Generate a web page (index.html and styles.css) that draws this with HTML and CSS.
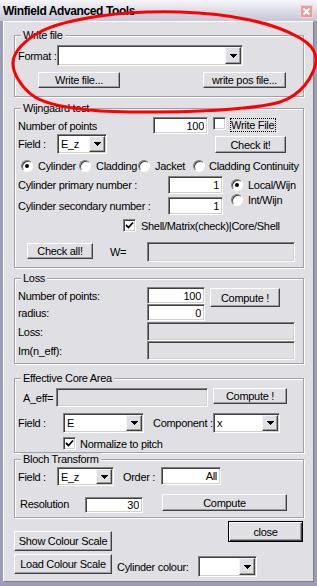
FILE: index.html
```html
<!DOCTYPE html>
<html lang="en">
<head>
<meta charset="UTF-8" />
<meta name="viewport" content="width=device-width, initial-scale=1" />
<title>Winfield Advanced Tools</title>
<link rel="stylesheet" href="styles.css">
</head>
<body>
<div class="window">
  <div class="titlebar">
    <span class="title">Winfield Advanced Tools</span>
    <span class="close-x">
      <svg width="11" height="11" viewBox="0 0 11 11"><path d="M2.5 2.5l6 6M8.5 2.5l-6 6" stroke="#fff" stroke-width="2" fill="none"/></svg>
    </span>
  </div>

  <div class="client">
    <!-- write file -->
    <div class="group g-write">
      <div class="group-title">Write file</div>
      <div class="row r-format">
        <span class="lbl w-field">Format :</span>
        <div class="combo c-format"><span class="val"></span><span class="drop"><svg width="7" height="4"><path d="M0 0h7l-3.5 4z"/></svg></span></div>
      </div>
      <div class="row r-writebtns">
        <button class="btn b-write">Write file...</button>
        <button class="btn b-writepos">write pos file...</button>
      </div>
    </div>

    <!-- wijngaard test -->
    <div class="group g-wijn">
      <div class="group-title">Wijngaard test</div>
      <div class="row r-points">
        <span class="lbl w-points">Number of points</span>
        <input class="edit e-55" value="100">
        <span class="check c-write"></span>
        <span class="focus">Write File</span>
      </div>
      <div class="row r-field">
        <span class="lbl w-field">Field :</span>
        <div class="combo c-fieldw"><span class="val">E_z</span><span class="drop"><svg width="7" height="4"><path d="M0 0h7l-3.5 4z"/></svg></span></div>
        <button class="btn b-checkit">Check it!</button>
      </div>
      <div class="row r-radios">
        <span class="opt o-cyl"><span class="radio on"></span><span class="opt-txt">Cylinder</span></span>
        <span class="opt o-clad"><span class="radio"></span><span class="opt-txt">Cladding</span></span>
        <span class="opt o-jack"><span class="radio"></span><span class="opt-txt">Jacket</span></span>
        <span class="opt o-cont"><span class="radio"></span><span class="opt-txt tight">Cladding Continuity</span></span>
      </div>
      <div class="row r-cyl1">
        <span class="lbl w-cyl">Cylinder primary number :</span>
        <input class="edit e-55 tall" value="1">
        <span class="opt o-side"><span class="radio on"></span><span class="opt-txt">Local/Wijn</span></span>
      </div>
      <div class="row r-cyl2">
        <span class="lbl w-cyl">Cylinder secondary number :</span>
        <input class="edit e-55 tall" value="1">
        <span class="opt o-side up"><span class="radio"></span><span class="opt-txt">Int/Wijn</span></span>
      </div>
      <div class="row r-shell">
        <span class="check on c-shell"><svg width="9" height="9" viewBox="0 0 9 9"><path d="M1 4l2.5 2.5L8 1.5" stroke="#000" stroke-width="1.8" fill="none"/></svg></span>
        <span class="opt-txt">Shell/Matrix(check)|Core/Shell</span>
      </div>
      <div class="row r-checkall">
        <button class="btn b-checkall">Check all!</button>
        <span class="lbl w-w">W=</span>
        <input class="edit e-148 h20" disabled>
      </div>
    </div>

    <!-- loss -->
    <div class="group g-loss">
      <div class="group-title">Loss</div>
      <div class="row r-lpoints">
        <span class="lbl w-loss">Number of points:</span>
        <input class="edit e-58" value="100">
        <button class="btn b-compute1">Compute !</button>
      </div>
      <div class="row r-radius">
        <span class="lbl w-loss">radius:</span>
        <input class="edit e-58" value="0">
      </div>
      <div class="row r-lossval">
        <span class="lbl w-loss">Loss:</span>
        <input class="edit e-148 h19" disabled>
      </div>
      <div class="row r-imval">
        <span class="lbl w-loss">Im(n_eff):</span>
        <input class="edit e-148 h19" disabled>
      </div>
    </div>

    <!-- effective core area -->
    <div class="group g-eca">
      <div class="group-title">Effective Core Area</div>
      <div class="row r-aeff">
        <span class="lbl w-aeff">A_eff=</span>
        <input class="edit e-152 h19" disabled>
        <button class="btn b-compute2">Compute !</button>
      </div>
      <div class="row r-ecafield">
        <span class="lbl w-field2">Field :</span>
        <div class="combo c-ecafield"><span class="val">E</span><span class="drop"><svg width="7" height="4"><path d="M0 0h7l-3.5 4z"/></svg></span></div>
        <span class="lbl w-comp">Component :</span>
        <div class="combo c-comp"><span class="val">x</span><span class="drop"><svg width="7" height="4"><path d="M0 0h7l-3.5 4z"/></svg></span></div>
      </div>
      <div class="row r-norm">
        <span class="check on c-norm"><svg width="9" height="9" viewBox="0 0 9 9"><path d="M1 4l2.5 2.5L8 1.5" stroke="#000" stroke-width="1.8" fill="none"/></svg></span>
        <span class="opt-txt">Normalize to pitch</span>
      </div>
    </div>

    <!-- bloch -->
    <div class="group g-bloch">
      <div class="group-title">Bloch Transform</div>
      <div class="row r-bfield">
        <span class="lbl w-field">Field :</span>
        <div class="combo c-bfield"><span class="val">E_z</span><span class="drop"><svg width="7" height="4"><path d="M0 0h7l-3.5 4z"/></svg></span></div>
        <span class="lbl w-order">Order :</span>
        <input class="edit e-60 tall" value="All">
      </div>
      <div class="row r-res">
        <span class="lbl w-res">Resolution</span>
        <input class="edit e-58 short" value="30">
        <button class="btn b-compute3">Compute</button>
      </div>
    </div>

    <div class="footer">
      <div class="foot-left">
        <button class="btn b-scale">Show Colour Scale</button>
        <button class="btn b-scale b-load">Load Colour Scale</button>
      </div>
      <div class="foot-right">
        <button class="btn default b-close">close</button>
        <div class="row r-cylcol">
          <span class="lbl w-cylcol">Cylinder colour:</span>
          <div class="combo c-cylcol"><span class="val"></span><span class="drop"><svg width="7" height="4"><path d="M0 0h7l-3.5 4z"/></svg></span></div>
        </div>
      </div>
    </div>
  </div>

  <svg class="mark" width="317" height="586" viewBox="0 0 317 586">
    <path d="M13 62C13.8 51.2 25.5 39.7 40 32C54.5 24.3 76.7 19.3 100 16C123.3 12.7 155 11.3 180 12C205 12.7 230 15.7 250 20C270 24.3 289 31.7 300 38C311 44.3 315.2 50.2 316 58C316.8 65.8 311 77.7 305 85C299 92.3 292 98 280 102C268 106 253 107.3 233 109C213 110.7 183.8 111.8 160 112C136.2 112.2 110.8 112.2 90 110C69.2 107.8 47.8 105 35 97C22.2 89 12.2 72.8 13 62Z" fill="none" stroke="#f00" stroke-width="3"/>
  </svg>
</div>
</body>
</html>
```

FILE: styles.css
```css
* {
  box-sizing: border-box;
}
body {
  margin: 0;
  font-family: "Liberation Sans", Arial, sans-serif;
  font-size: 11px;
  letter-spacing: -0.3px;
  color: #000;
  background: #e0dfe3;
}
.window {
  position: relative;
  width: 317px;
  height: 586px;
  background: #9a9cb8;
  overflow: hidden;
}
.titlebar {
  height: 21px;
  display: flex;
  align-items: center;
  justify-content: space-between;
  padding: 0 4px 0 3px;
  background: linear-gradient(#f6f6fa, #e2e2ea 40%, #c6c6d6);
}
.title {
  font-weight: bold;
  font-size: 12px;
  letter-spacing: -0.4px;
}
.close-x {
  width: 13px;
  height: 13px;
  margin-top: 1px;
  display: flex;
  align-items: center;
  justify-content: center;
  background: #e89c9c;
  border: 1px solid #f6d4d4;
}
.close-x svg {
  display: block;
}
.client {
  margin: 0 3px;
  height: 561px;
  background: #e0dfe3;
  border: 1px solid;
  border-color: #fff #808080 #808080 #fff;
}

/* group boxes */
.group {
  margin-left: 10px;
  width: 290px;
  border: 1px solid #a0a0a8;
  box-shadow: inset 1px 1px 0 #fff, 1px 1px 0 #fff;
}
.group-title {
  width: fit-content;
  margin: -7px 0 0 6px;
  padding: 0 2px;
  line-height: 13px;
  background: #e0dfe3;
}
.g-write { margin-top: 13px; padding-bottom: 8px; }
.g-wijn { margin-top: 11px; padding-bottom: 5px; }
.g-loss { margin-top: 10px; padding-bottom: 3px; }
.g-eca { margin-top: 14px; padding-bottom: 2px; }
.g-bloch { margin-top: 6px; padding-bottom: 4px; }

.row {
  display: flex;
  align-items: center;
}
.lbl {
  flex: none;
  white-space: nowrap;
  margin-left: 3px;
}

/* controls */
.edit {
  flex: none;
  height: 17px;
  font: inherit;
  letter-spacing: inherit;
  color: #000;
  text-align: right;
  padding: 0 3px;
  background: #fff;
  border: 1px solid;
  border-color: #808080 #fff #fff #808080;
  box-shadow: inset 1px 1px 0 #404040, inset -1px -1px 0 #d4d0c8;
  outline: none;
}
.edit:disabled {
  background: #e0dfe3;
}
.btn {
  flex: none;
  font: inherit;
  letter-spacing: inherit;
  color: #000;
  padding: 0;
  background: #e0dfe3;
  border: 1px solid;
  border-color: #fff #404040 #404040 #fff;
  box-shadow: inset -1px -1px 0 #9d9da1;
  display: flex;
  align-items: center;
  justify-content: center;
  white-space: nowrap;
}
.btn.default {
  border-color: #000;
  box-shadow: inset 1px 1px 0 #fff, inset -1px -1px 0 #404040, inset -2px -2px 0 #9d9da1;
}
.combo {
  flex: none;
  display: flex;
  height: 20px;
  padding: 1px;
  background: #fff;
  border: 1px solid;
  border-color: #808080 #fff #fff #808080;
  box-shadow: inset 1px 1px 0 #404040, inset -1px -1px 0 #d4d0c8;
}
.combo .val {
  flex: 1;
  padding-left: 2px;
  display: flex;
  align-items: center;
}
.drop {
  width: 16px;
  display: flex;
  align-items: center;
  justify-content: center;
  background: #e0dfe3;
  border: 1px solid;
  border-color: #f4f4f6 #404040 #404040 #f4f4f6;
  box-shadow: inset -1px -1px 0 #9d9da1;
}
.drop svg {
  display: block;
  shape-rendering: crispEdges;
}
.radio {
  flex: none;
  position: relative;
  width: 12px;
  height: 12px;
  border-radius: 50%;
  background: #fff;
  border: 1px solid;
  border-color: #808080 #fff #fff #808080;
  box-shadow: inset 1px 1px 0 #404040;
}
.radio.on::after {
  content: "";
  position: absolute;
  left: 3px;
  top: 3px;
  width: 4px;
  height: 4px;
  border-radius: 50%;
  background: #000;
}
.check {
  flex: none;
  width: 13px;
  height: 13px;
  display: flex;
  align-items: center;
  justify-content: center;
  background: #fff;
  border: 1px solid;
  border-color: #808080 #fff #fff #808080;
  box-shadow: inset 1px 1px 0 #404040, inset -1px -1px 0 #d4d0c8;
}
.check svg {
  display: block;
}
.opt {
  flex: none;
  display: flex;
  align-items: center;
}
.opt-txt {
  margin-left: 5px;
  white-space: nowrap;
}
.opt-txt.tight {
  margin-left: 4px;
}
.focus {
  align-self: flex-start;
  margin: 1px 0 0 4px;
  padding: 0 1px 0 0;
  height: 14px;
  line-height: 12px;
  border: 1px dotted #000;
}

/* write file */
.w-field { width: 39px; }
.r-format { margin-top: 3px; height: 21px; }
.c-format { width: 186px; height: 21px; }
.r-writebtns { margin-top: 6px; height: 16px; }
.b-write { margin-left: 23px; width: 82px; height: 16px; }
.b-writepos { margin-left: 83px; width: 83px; height: 16px; }

/* wijngaard */
.r-points { margin-top: 2px; height: 17px; }
.w-points { width: 135px; }
.e-55 { width: 55px; }
.c-write { align-self: flex-start; margin-left: 5px; }
.r-field { height: 20px; }
.c-fieldw { width: 50px; }
.b-checkit { align-self: flex-start; margin: 2px 0 0 108px; width: 71px; height: 17px; }
.r-radios { margin-top: 4px; height: 16px; }
.o-cyl { margin-left: 6px; width: 58px; }
.o-clad { width: 59px; }
.o-jack { width: 55px; }
.r-cyl1 { margin-top: 2px; height: 18px; }
.r-cyl2 { margin-top: 3px; height: 18px; }
.w-cyl { width: 150px; }
.edit.tall { height: 18px; }
.o-side { margin-left: 8px; }
.o-side.up { align-self: flex-start; margin-top: -3px; }
.r-shell { margin-top: 4px; height: 13px; }
.c-shell { margin-left: 108px; }
.r-checkall { margin-top: 10px; height: 20px; }
.b-checkall { align-self: flex-start; margin: 1px 0 0 12px; width: 66px; height: 16px; }
.w-w { margin-left: 17px; width: 37px; }
.e-148 { width: 148px; }
.edit.h20 { height: 20px; }
.edit.h19 { height: 19px; }

/* loss */
.r-lpoints { margin-top: 2px; height: 17px; }
.w-loss { width: 129px; }
.e-58 { width: 58px; }
.b-compute1 { align-self: flex-start; margin: 1px 0 0 5px; width: 70px; height: 19px; }
.r-radius { height: 17px; }
.r-lossval { margin-top: 1px; height: 19px; }
.r-imval { height: 19px; }

/* effective core area */
.r-aeff { margin-top: 3px; height: 19px; }
.w-aeff { margin-left: 8px; width: 33px; }
.e-152 { width: 152px; }
.b-compute2 { align-self: flex-start; margin-left: 5px; width: 74px; height: 16px; }
.r-ecafield { margin-top: 6px; height: 20px; }
.w-field2 { width: 45px; }
.c-ecafield { width: 81px; }
.w-comp { margin-left: 9px; width: 60px; }
.c-comp { width: 67px; }
.r-norm { margin-top: 4px; height: 13px; }
.c-norm { margin-left: 48px; }
.r-norm .opt-txt { margin-left: 4px; }

/* bloch */
.r-bfield { margin-top: 1px; height: 19px; }
.c-bfield { width: 57px; height: 19px; }
.w-order { margin-left: 9px; width: 38px; }
.e-60 { width: 60px; align-self: flex-start; }
.r-res { margin-top: 8px; height: 19px; }
.w-res { margin-left: 5px; width: 65px; }
.edit.short { align-self: flex-start; margin-top: 3px; height: 16px; }
.b-compute3 { align-self: flex-start; margin-left: 19px; width: 125px; height: 17px; }

/* footer */
.footer {
  display: flex;
}
.foot-left {
  margin-left: 10px;
  width: 98px;
  display: flex;
  flex-direction: column;
}
.b-scale { margin-top: 13px; width: 98px; height: 20px; }
.b-load { margin-top: 3px; }
.foot-right {
  flex: 1;
  margin: 0 10px 0 5px;
  display: flex;
  flex-direction: column;
}
.b-close { align-self: flex-end; margin-top: 3px; width: 75px; height: 21px; }
.r-cylcol { margin-top: 14px; height: 21px; }
.w-cylcol { margin-left: 0; width: 81px; }
.c-cylcol { width: 59px; height: 21px; }

.mark {
  position: absolute;
  left: 0;
  top: 0;
  pointer-events: none;
}
```
